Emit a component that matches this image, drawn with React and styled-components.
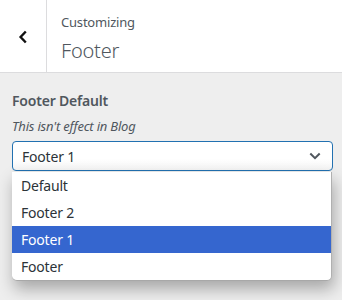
import React from "react";
import styled, { createGlobalStyle } from "styled-components";

const Global = createGlobalStyle`
  html, body {
    margin: 0;
    padding: 0;
    background: #eeeeee;
    font-family: "Noto Sans", "Open Sans", sans-serif;
    color: #3c434a;
  }
`;

const options = ["Default", "Footer 2", "Footer 1", "Footer"];

export default function App() {
  const selected = "Footer 1";

  return (
    <>
      <Global />
      <Page>
        <Header>
          <BackButton aria-label="Back">
            <svg width="10" height="14" viewBox="0 0 10 14">
              <path
                d="M7.8 1.5 L2.6 7 L7.8 12.5"
                fill="none"
                stroke="#111"
                strokeWidth="2.4"
              />
            </svg>
          </BackButton>
          <Titles>
            <Action>Customizing</Action>
            <Title>Footer</Title>
          </Titles>
        </Header>
        <Section>
          <Label>Footer Default</Label>
          <Description>This isn't effect in Blog</Description>
          <SelectWrap>
            <Select>
              <span>{selected}</span>
              <svg width="12" height="8" viewBox="0 0 12 8">
                <path
                  d="M1.3 1.5 L6 6.2 L10.7 1.5"
                  fill="none"
                  stroke="#50575e"
                  strokeWidth="2"
                />
              </svg>
            </Select>
            <Menu>
              {options.map((opt) => (
                <Option key={opt} active={opt === selected}>
                  {opt}
                </Option>
              ))}
            </Menu>
          </SelectWrap>
        </Section>
      </Page>
    </>
  );
}

const Page = styled.div`
  width: 342px;
  height: 300px;
  overflow: hidden;
  letter-spacing: -0.2px;
`;

const Header = styled.div`
  display: flex;
  height: 72px;
  background: #ffffff;
  border-bottom: 1px solid #dcdcde;
`;

const BackButton = styled.div`
  width: 46px;
  border-right: 1px solid #dcdcde;
  display: flex;
  align-items: center;
  justify-content: center;
  padding-top: 2px;
`;

const Titles = styled.div`
  display: flex;
  flex-direction: column;
  padding: 12px 0 0 14px;
`;

const Action = styled.span`
  font-size: 13px;
  line-height: 20px;
  color: #50575e;
`;

const Title = styled.span`
  font-size: 20px;
  line-height: 28px;
  margin-top: 5px;
  font-weight: 300;
  color: #50575e;
`;

const Section = styled.div`
  padding: 18px 9px 0 12px;
`;

const Label = styled.div`
  font-size: 14px;
  font-weight: 600;
  line-height: 20px;
  color: #50575e;
`;

const Description = styled.div`
  margin-top: 6px;
  font-size: 13px;
  font-style: italic;
  line-height: 18px;
  color: #50575e;
`;

const SelectWrap = styled.div`
  position: relative;
  margin-top: 6px;
`;

const Select = styled.div`
  height: 30px;
  box-sizing: border-box;
  border: 1px solid #2271b1;
  border-radius: 4px;
  background: linear-gradient(#ffffff 60%, #f4f4f4);
  display: flex;
  align-items: center;
  justify-content: space-between;
  padding: 0 11px 0 9px;
  font-size: 14px;
  color: #2c3338;
`;

const Menu = styled.div`
  position: absolute;
  left: 0;
  right: 1px;
  top: 31px;
  background: #ffffff;
  border-right: 1px solid #b0b0b0;
  border-bottom: 1px solid #a8a8a8;
  border-radius: 0 0 5px 5px;
  box-shadow: 2px 8px 16px rgba(0, 0, 0, 0.3);
  overflow: hidden;
`;

const Option = styled.div`
  height: 27px;
  display: flex;
  align-items: center;
  padding-left: 9px;
  font-size: 14px;
  color: ${(p) => (p.active ? "#ffffff" : "#2c3338")};
  background: ${(p) => (p.active ? "#3566cf" : "transparent")};
`;
